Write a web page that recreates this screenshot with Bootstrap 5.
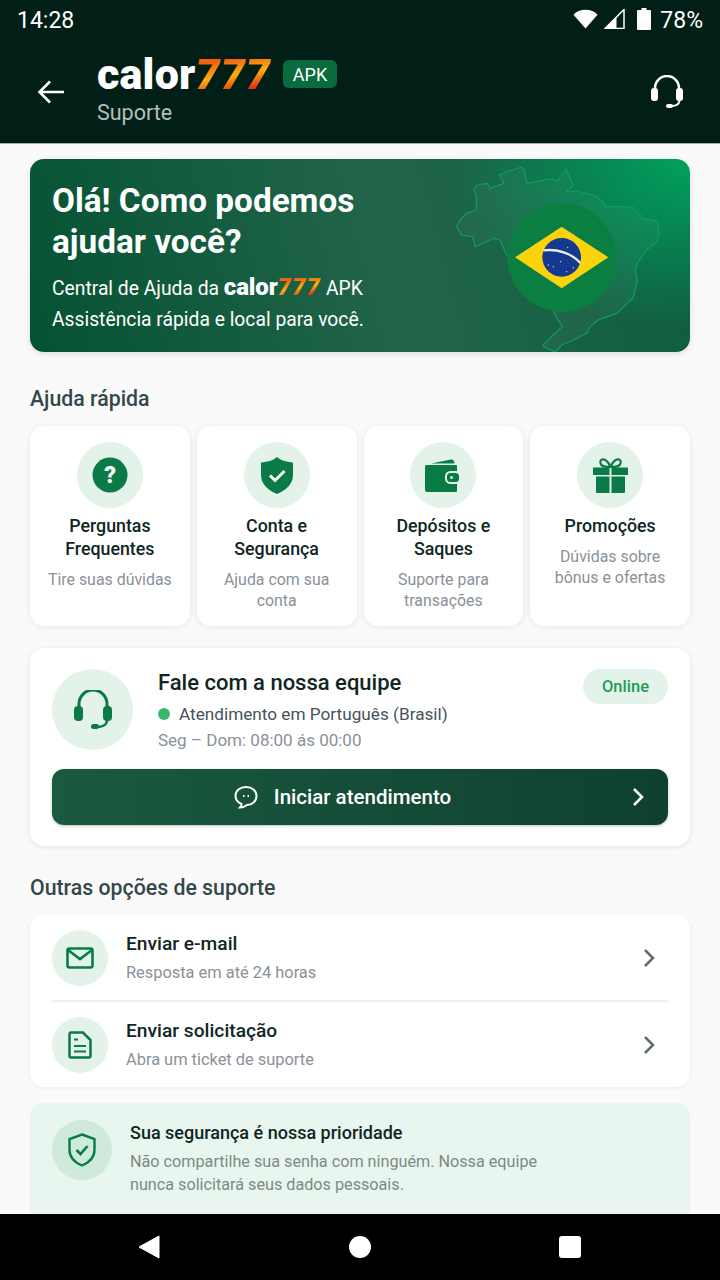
<!DOCTYPE html>
<html lang="pt-BR">
<head>
  <meta charset="UTF-8">
  <meta name="viewport" content="width=device-width, initial-scale=1.0"/>
  <title>Suporte</title>
  <link href="https://cdn.jsdelivr.net/npm/bootstrap@5.3.0/dist/css/bootstrap.min.css" rel="stylesheet">
  <style>
    body { font-family: Roboto, "Liberation Sans", sans-serif; background: #fafafa; }
    .screen { width: 720px; height: 1280px; overflow: hidden; }
    .top-area { height: 144px; background: #021f17; color: #fff; border-bottom: 1px solid #9fb0a8; flex: none; }
    .status-row { height: 41px; padding: 2px 17px 0; font-size: 23px; }
    .status-icons { gap: 6px; }
    .status-icons svg { margin-top: -6px; }
    .status-row .pct { margin-left: 3px; }
    .bat-icon { margin-left: 6px; }
    .head-row { padding: 0 36px 0 37px; height: 102px; }
    .back-btn { width: 60px; }
    .head-text { padding-bottom: 2px; }
    .brand { font-weight: 900; line-height: 36px; font-size: 43px; letter-spacing: .2px; }
    .brand-hot { font-style: italic; letter-spacing: 1px; background: linear-gradient(170deg, #f4600c 25%, #fdb010 52%, #e0300c 78%); -webkit-background-clip: text; background-clip: text; color: transparent; }
    .apk-tag { background: #0a6b3e; border-radius: 6px; font-size: 18px; height: 28px; width: 54px; margin-left: 12px; }
    .head-sub { font-size: 21.5px; color: #b3c0ba; line-height: 26px; margin-top: 8px; }
    .page-body { padding: 15px 30px 0; flex: 1; overflow: hidden; min-height: 0; }
    .hero { height: 193px; border-radius: 14px; padding: 21px 22px; color: #fff; background: radial-gradient(ellipse 240px 170px at 100% 0, #00a25e, transparent), linear-gradient(75deg, #055233 0%, #22654a 55%, #0d5c3f 100%); box-shadow: 0 2px 6px rgba(0,0,0,.12); overflow: hidden; }
    .hero h1 { font-size: 33.3px; font-weight: 700; line-height: 41px; margin: 0 0 10px; }
    .hero p { font-size: 19.3px; line-height: 31px; margin: 0; }
    .hero-mark { font-weight: 900; font-size: 24px; letter-spacing: -.1px; }
    .hero-art { position: absolute; top: 0; right: 0; }
    .section-title { font-size: 21.3px; font-weight: 500; color: #34474a; line-height: 26px; }
    .title-quick { margin-top: 34px; margin-bottom: 14px; }
    .title-other { margin-top: 29px; margin-bottom: 14px; }
    .quick-row { gap: 7px; }
    .quick-card { flex: 1 1 0; height: 200px; background: #fff; border: 0; border-radius: 14px; padding-top: 16px; box-shadow: 0 1px 6px rgba(0,0,0,.09); text-align: center; }
    .icon-disc { background: #e3f3ea; border-radius: 50%; flex: none; }
    .disc-66 { width: 66px; height: 66px; }
    .disc-81 { width: 81px; height: 81px; }
    .disc-56 { width: 56px; height: 56px; }
    .disc-60 { width: 60px; height: 60px; background: #cfeadb; }
    .quick-title { font-size: 17.8px; font-weight: 500; line-height: 23px; color: #10261f; margin-top: 6px; }
    .quick-sub { font-size: 15.9px; line-height: 21.5px; color: #8a9199; margin-top: 8.500px; }
    .team-card { height: 198px; background: #fff; border: 0; border-radius: 14px; padding: 21px 22px; margin-top: 22px; box-shadow: 0 1px 6px rgba(0,0,0,.09); }
    .team-text { margin-left: 25px; }
    .team-title { font-size: 22px; font-weight: 500; color: #10261f; line-height: 28px; }
    .team-line { font-size: 17.2px; color: #46535a; line-height: 26px; margin-top: 4px; }
    .team-hours { font-size: 17px; color: #8a9199; line-height: 26px; }
    .live-dot { width: 12px; height: 12px; background: #3bb96b; border-radius: 50%; margin-right: 9px; }
    .online-pill { background: #e3f3ea; color: #1f9d55; font-size: 16.5px; font-weight: 500; width: 85px; height: 35px; padding-top: 1px; border-radius: 18px; }
    .start-btn { height: 56px; margin-top: 16px; border-radius: 12px; border: 0; color: #fff; font-size: 20.5px; font-weight: 500; background: linear-gradient(90deg, #1a5a40, #0f4030); box-shadow: 0 1px 3px rgba(0,0,0,.25); padding: 0 35px 0 0; }
    .start-btn:hover { color: #fff; }
    .btn-chevron { right: 24px; }
    .other-card { height: 172px; background: #fff; border: 0; border-radius: 14px; padding: 0 22px; box-shadow: 0 1px 4px rgba(0,0,0,.06); }
    .other-row { height: 86px; padding: 0 13px 0 0; border: 0; background: transparent; }
    .other-row + .other-row { height: 87px; margin-top: -1px; border-top: 2px solid #eef0ef; }
    .other-text { margin-left: 18px; }
    .other-title { font-size: 19.2px; font-weight: 500; color: #10261f; line-height: 24px; }
    .other-sub { font-size: 16.4px; color: #8a9199; line-height: 22px; margin-top: 6px; }
    .safe-box { height: 130px; background: #e9f6ef; border-radius: 14px; padding: 17px 22px; margin-top: 16px; }
    .safe-text-wrap { margin-left: 18px; padding-top: 1px; }
    .safe-title { font-size: 18px; font-weight: 500; color: #10261f; line-height: 24px; }
    .safe-text { font-size: 16.2px; color: #7d8a86; line-height: 23px; margin-top: 5px; }
    .nav-bar { height: 66px; background: #000; flex: none; padding: 0 139px 0 138px; }
  </style>
</head>

<body>
<div class="screen d-flex flex-column">

  <div class="top-area">
    <div class="status-row d-flex align-items-center">
      <span>14:28</span>
      <span class="ms-auto d-flex align-items-center status-icons">
        <svg width="25" height="20" viewBox="0 0 26 20"><path d="M.5 5.500C3.500 2.500 8 .5 13 .5s9.500 2 12.500 5L13 20z" fill="#fff"/></svg>
        <svg width="21" height="20" viewBox="0 0 20 20"><path d="M19.500 .5v19H.5z" fill="none" stroke="#fff" stroke-width="1.500"/><path d="M.5 19.500 12 8v11.500z" fill="#fff"/></svg>
        <svg class="bat-icon" width="14" height="22" viewBox="0 0 14 22"><path d="M4.500 0h5v2H13a1 1 0 0 1 1 1v18a1 1 0 0 1-1 1H1a1 1 0 0 1-1-1V3a1 1 0 0 1 1-1h3.500z" fill="#fff"/></svg>
        <span class="pct">78%</span>
      </span>
    </div>
    <div class="head-row d-flex align-items-center">
      <div class="back-btn">
        <svg width="28" height="28" viewBox="0 0 28 28" fill="none" stroke="#fff" stroke-width="2.600"><path d="M27 14H3M13 3.500 2.500 14 13 24.500"/></svg>
      </div>
      <div class="flex-grow-1 head-text">
        <div class="d-flex align-items-center">
          <span class="brand">calor<span class="brand-hot">777</span></span>
          <span class="apk-tag d-flex align-items-center justify-content-center">APK</span>
        </div>
        <div class="head-sub">Suporte</div>
      </div>
      <svg width="34" height="34" viewBox="0 0 34 34" fill="none"><path d="M5 17v-4a12 12 0 0 1 24 0v4" stroke="#fff" stroke-width="2.500"/><rect x="1" y="13" width="7" height="13" rx="3" fill="#fff"/><rect x="26" y="13" width="7" height="13" rx="3" fill="#fff"/><path d="M29.500 25c0 4-3 6-8 6" stroke="#fff" stroke-width="2"/><rect x="16" y="29" width="7" height="4" rx="2" fill="#fff"/></svg>
    </div>
  </div>

  <div class="page-body">
    <div class="hero position-relative">
      <svg class="hero-art" width="330" height="193" viewBox="0 12 990 579">
        <path d="M290 215 300 195 320 175 348 165 350 130 342 105 350 90 382 85 390 100 432 85 418 60 440 50 485 36 495 50 500 85 530 80 570 72 592 78 618 42 630 70 640 90 620 110 650 108 700 120 728 138 735 155 780 155 820 158 850 190 893 200 898 235 890 260 860 285 835 320 826 340 832 380 818 430 770 475 715 495 690 515 680 535 640 555 605 570 585 592 548 572 580 540 607 515 585 480 575 460 440 300 420 255 400 250 345 275 338 245 305 240z" fill="#fff" fill-opacity=".035" stroke="#0f9e5f" stroke-width="3.500" stroke-linejoin="round"/>
        <circle cx="605" cy="307" r="163" fill="#0b7f42"/>
        <path d="M465 307 605 215 745 307 605 400z" fill="#fbd30c"/>
        <circle cx="605" cy="307" r="58" fill="#14398e"/>
        <path d="M550 286c42-5 84 8 111 38" fill="none" stroke="#e8edf0" stroke-width="7"/>
        <g fill="#dfe6ef"><circle cx="623" cy="277" r="2"/><circle cx="580" cy="335" r="2"/><circle cx="602" cy="320" r="2"/><circle cx="565" cy="330" r="2"/><circle cx="620" cy="350" r="2"/><circle cx="640" cy="338" r="2"/></g>
      </svg>
      <div class="position-relative">
        <h1>Olá! Como podemos<br>ajudar você?</h1>
        <p>Central de Ajuda da <span class="hero-mark">calor<span class="brand-hot">777</span></span> APK</p>
        <p>Assistência rápida e local para você.</p>
      </div>
    </div>

    <div class="section-title title-quick">Ajuda rápida</div>

    <div class="d-flex quick-row">
      <div class="card quick-card align-items-center">
        <div class="icon-disc disc-66 d-flex align-items-center justify-content-center">
          <svg width="36" height="36" viewBox="0 0 36 36"><circle cx="18" cy="18" r="17.500" fill="#0a7a46"/><text x="18" y="26" text-anchor="middle" font-family="Roboto, sans-serif" font-weight="900" font-size="23" fill="#fff">?</text></svg>
        </div>
        <div class="quick-title">Perguntas<br>Frequentes</div>
        <div class="quick-sub">Tire suas dúvidas</div>
      </div>
      <div class="card quick-card align-items-center">
        <div class="icon-disc disc-66 d-flex align-items-center justify-content-center">
          <svg width="32" height="37" viewBox="0 0 32 37"><path d="M16 0c3 3 9 5 16 5.500V18c0 9-7 15.500-16 19C7 33.500 0 27 0 18V5.500C7 5 13 3 16 0z" fill="#0a7a46"/><path d="M9 18.500l5 5 9.500-9.500" fill="none" stroke="#fff" stroke-width="3"/></svg>
        </div>
        <div class="quick-title">Conta e<br>Segurança</div>
        <div class="quick-sub">Ajuda com sua<br>conta</div>
      </div>
      <div class="card quick-card align-items-center">
        <div class="icon-disc disc-66 d-flex align-items-center justify-content-center">
          <svg width="36" height="33" viewBox="0 0 36 33"><path d="M6 4.500 26 .5c1.500-.3 2.500.5 3 2l.5 2z" fill="#0a7a46"/><path d="M2 6h29a1 1 0 0 1 1 1v25a1 1 0 0 1-1 1H2a2 2 0 0 1-2-2V7a2 2 0 0 1 2-1z" fill="#0a7a46"/><rect x="21" y="13" width="14" height="11" rx="4.500" fill="#0a7a46" stroke="#e3f3ea" stroke-width="2"/><circle cx="26.500" cy="18.500" r="1.500" fill="#e3f3ea"/></svg>
        </div>
        <div class="quick-title">Depósitos e<br>Saques</div>
        <div class="quick-sub">Suporte para<br>transações</div>
      </div>
      <div class="card quick-card align-items-center">
        <div class="icon-disc disc-66 d-flex align-items-center justify-content-center">
          <svg width="35" height="35" viewBox="0 0 35 35"><path d="M17.500 9C15 3 11.500 0.500 9 1.500 6.500 2.500 7 6 9 7.500 11 9 14.500 9 17.500 9zm0 0C20 3 23.500.5 26 1.500c2.500 1 2 4.500 0 6-2 1.500-5.500 1.500-8.500 1.500z" fill="none" stroke="#0a7a46" stroke-width="2.200"/><path d="M0 9.500h16.500V17H0zM18.500 9.500H35V17H18.500zM3 18.500h13.500V35H4a1 1 0 0 1-1-1zM18.500 18.500H32V34a1 1 0 0 1-1 1H18.500z" fill="#0a7a46"/></svg>
        </div>
        <div class="quick-title">Promoções</div>
        <div class="quick-sub">Dúvidas sobre<br>bônus e ofertas</div>
      </div>
    </div>

    <div class="card team-card">
      <div class="d-flex">
        <div class="icon-disc disc-81 d-flex align-items-center justify-content-center">
          <svg width="40" height="40" viewBox="0 0 40 40" fill="none"><path d="M6 20v-6a14 14 0 0 1 28 0v6" stroke="#0a7a46" stroke-width="3"/><rect x="1" y="16" width="9" height="15" rx="4" fill="#0a7a46"/><rect x="30" y="16" width="9" height="15" rx="4" fill="#0a7a46"/><path d="M34 30c0 5-5 7-10 7" stroke="#0a7a46" stroke-width="2.500"/><rect x="18" y="34" width="8" height="5" rx="2.500" fill="#0a7a46"/></svg>
        </div>
        <div class="flex-grow-1 team-text">
          <div class="team-title">Fale com a nossa equipe</div>
          <div class="team-line d-flex align-items-center"><span class="live-dot"></span>Atendimento em Português (Brasil)</div>
          <div class="team-hours">Seg – Dom: 08:00 ás 00:00</div>
        </div>
        <div class="online-pill d-flex align-items-center justify-content-center">Online</div>
      </div>
      <button type="button" class="btn start-btn d-flex align-items-center justify-content-center position-relative">
        <svg class="me-3" width="24" height="24" viewBox="0 0 24 24" fill="none" stroke="#fff" stroke-width="2"><path d="M12 2c6 0 10.500 3.500 10.500 9S18 20 13 20c-2 1.500-4 2.500-7 2.500 1-1 1.500-2 1.500-3.500C4 17.500 1.500 15 1.500 11 1.500 5.500 6 2 12 2z"/><path d="M9 11h1.500M13.500 11H15" stroke-width="1.800"/></svg>
        Iniciar atendimento
        <svg class="position-absolute top-50 translate-middle-y btn-chevron" width="12" height="20" viewBox="0 0 12 20" fill="none" stroke="#fff" stroke-width="2.500"><path d="M2 2l8 8-8 8"/></svg>
      </button>
    </div>

    <div class="section-title title-other">Outras opções de suporte</div>

    <div class="card other-card">
      <div class="other-row d-flex align-items-center">
        <div class="icon-disc disc-56 d-flex align-items-center justify-content-center">
          <svg width="28" height="22" viewBox="0 0 28 22" fill="none" stroke="#0a7a46" stroke-width="2.600"><rect x="1.500" y="1.500" width="25" height="19" rx="2"/><path d="M2 3l12 9 12-9"/></svg>
        </div>
        <div class="flex-grow-1 other-text">
          <div class="other-title">Enviar e-mail</div>
          <div class="other-sub">Resposta em até 24 horas</div>
        </div>
        <svg width="12" height="20" viewBox="0 0 12 20" fill="none" stroke="#5f6b70" stroke-width="2.500"><path d="M2 2l8 8-8 8"/></svg>
      </div>
      <div class="other-row d-flex align-items-center">
        <div class="icon-disc disc-56 d-flex align-items-center justify-content-center">
          <svg width="24" height="28" viewBox="0 0 24 28" fill="none" stroke="#0a7a46" stroke-width="2.500"><path d="M3 1.500h12l7.500 7.500v16a1.500 1.500 0 0 1-1.500 1.500H3A1.500 1.500 0 0 1 1.500 25V3A1.500 1.500 0 0 1 3 1.500z"/><path d="M6 15h12M6 20.500h12M6 8.500h4" stroke-width="2.200"/></svg>
        </div>
        <div class="flex-grow-1 other-text">
          <div class="other-title">Enviar solicitação</div>
          <div class="other-sub">Abra um ticket de suporte</div>
        </div>
        <svg width="12" height="20" viewBox="0 0 12 20" fill="none" stroke="#5f6b70" stroke-width="2.500"><path d="M2 2l8 8-8 8"/></svg>
      </div>
    </div>

    <div class="safe-box d-flex">
      <div class="icon-disc disc-60 d-flex align-items-center justify-content-center">
        <svg width="28" height="34" viewBox="0 0 28 34" fill="none" stroke="#0a7a46" stroke-width="2.400"><path d="M14 1.500 26.500 6v11c0 7-5.500 12.500-12.500 15.500C7 29.500 1.500 24 1.500 17V6z"/><path d="M8.500 17l4 4 7-8" stroke-width="2.600"/></svg>
      </div>
      <div class="safe-text-wrap">
        <div class="safe-title">Sua segurança é nossa prioridade</div>
        <div class="safe-text">Não compartilhe sua senha com ninguém. Nossa equipe<br>nunca solicitará seus dados pessoais.</div>
      </div>
    </div>
  </div>

  <div class="nav-bar d-flex align-items-center justify-content-between">
    <svg width="22" height="24" viewBox="0 0 22 24"><path d="M21 1v22L1 12z" fill="#fff" stroke="#fff" stroke-linejoin="round"/></svg>
    <svg width="22" height="22" viewBox="0 0 22 22"><circle cx="11" cy="11" r="11" fill="#fff"/></svg>
    <svg width="22" height="22" viewBox="0 0 22 22"><rect width="22" height="22" rx="3" fill="#fff"/></svg>
  </div>

</div>

<script src="https://cdn.jsdelivr.net/npm/bootstrap@5.3.0/dist/js/bootstrap.bundle.min.js"></script>
</body>
</html>
